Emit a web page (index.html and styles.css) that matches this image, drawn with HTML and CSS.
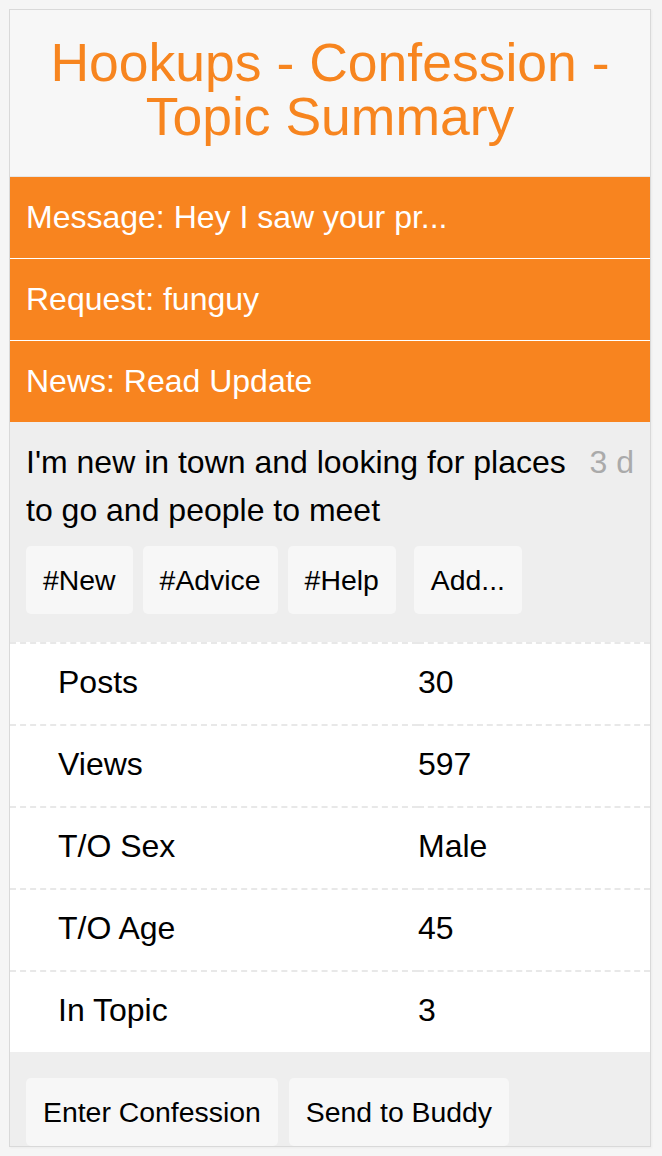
FILE: index.html
```html
<!DOCTYPE html>
<html>
<head>
<title>Hookups - Confession - Topic Summary</title>
<meta name="viewport" content="width=device-width, initial-scale=1.0">
<link rel="stylesheet" href="styles.css">
</head>
<body>

<div class="app">
    <div class="topic-head">
        <h1>Hookups - Confession - Topic Summary</h1>
    </div>

    <a class="notice" href="#">Message: Hey I saw your pr...</a>
    <a class="notice" href="#">Request: funguy</a>
    <a class="notice" href="#">News: Read Update</a>

    <div class="post">
        <span class="age">3 d</span>
        <p class="post-text">I'm new in town and looking for places to go and people to meet</p>
        <div class="tags">
            <button type="button" class="tag">#New</button>
            <button type="button" class="tag">#Advice</button>
            <button type="button" class="tag">#Help</button>
            <button type="button" class="tag add-tag">Add...</button>
        </div>
    </div>

    <table class="stats">
        <tr><td>Posts</td><td>30</td></tr>
        <tr><td>Views</td><td>597</td></tr>
        <tr><td>T/O Sex</td><td>Male</td></tr>
        <tr><td>T/O Age</td><td>45</td></tr>
        <tr><td>In Topic</td><td>3</td></tr>
    </table>

    <div class="actions">
        <button type="button" class="tag">Enter Confession</button>
        <button type="button" class="tag">Send to Buddy</button>
    </div>
</div>

</body>
</html>
```

FILE: styles.css
```css
body { margin: 0; background-color: #f5f5f5; font-family: "Liberation Sans", Arial, Helvetica, sans-serif; color: #000; }
.app { width: 640px; height: 1136px; margin: 9px; border: 1px solid #d9d9d9; overflow: hidden; background-color: #eee; box-shadow: 1px 1px 2px rgba(0,0,0,0.04); }

.topic-head { background-color: #f7f7f7; padding: 26px 10px 32px; border-bottom: 1px solid #e6e6e6; }
.topic-head h1 { margin: 0; font-size: 53.5px; line-height: 54px; font-weight: normal; text-align: center; color: #f7851f; }

.notice { display: block; background-color: #f8841f; color: #fff; text-decoration: none; font-size: 32px; line-height: 37px; padding: 22px 16px; }
.notice + .notice { border-top: 1px solid #fff; }

.post { background-color: #eee; padding: 16px 16px 28px; }
.post-text { margin: 0; font-size: 32px; line-height: 48px; }
.age { float: right; margin-left: 18px; font-size: 32px; line-height: 48px; color: #aaa; }

.tags { display: flex; gap: 10px; margin-top: 12px; }
.tag { background-color: #f7f7f7; border: none; border-radius: 5px; padding: 18px 17px; font-family: inherit; font-size: 28.4px; line-height: 32px; color: #000; }
.add-tag { margin-left: 8px; }

.stats { width: 100%; border-collapse: collapse; background-color: #fff; font-size: 32px; }
.stats td { border-top: 2px dashed #e8e8e8; padding: 20px 0 24px; line-height: 36px; }
.stats td:first-child { width: 360px; padding-left: 48px; }

.actions { display: flex; gap: 11px; padding: 26px 16px; }
```
